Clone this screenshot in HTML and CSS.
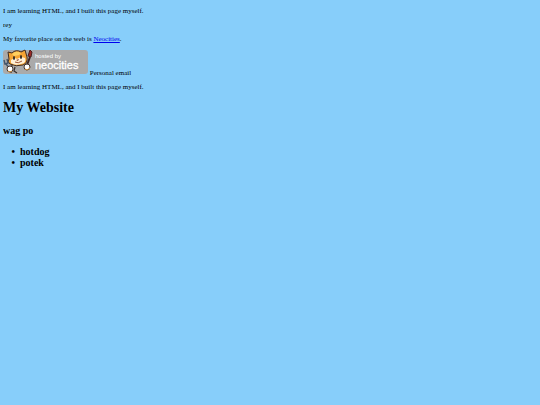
FILE: index.html
```
<!DOCTYPE html>
<html lang="en">
<head>
    <meta charset="UTF-8">
    <meta name="viewport" content="width=device-width, initial-scale=1.0">
    <title>My Website</title>
    <link rel="stylesheet" href="styles.css">
</head>
<body>
    <p>I am learning HTML, and I built this page myself.</p>
    <p>rey</p>
    <p>My favorite place on the web is <a href="https://neocities.org">Neocities</a>.</p>

    <div class="contact">
        <svg class="badge" viewBox="0 0 85 26" role="img" aria-label="hosted by neocities">
            <rect x="0" y="1" width="85" height="24" rx="3" fill="#aaa"/>
            <!-- body -->
            <path d="M9 16 L8 24 M12 18 L11 22 L14 24 M22 16 L24 21" fill="none" stroke="#3a302c" stroke-width="1.2"/>
            <!-- cat -->
            <path d="M6 10 L5 3 L9 4 Q13 0 18 3 L22 1 L24 8 Q25 14 20 16 Q13 18 7 15 Q4 13 6 10 Z" fill="#f5a535" stroke="#402b20" stroke-width="1"/>
            <path d="M9 5 Q13 1 18 4 L16 6 L11 7 Z" fill="#ffd060"/>
            <path d="M8 11 Q12 8 14 10 Q18 7 22 9 Q24 14 18 15 Q12 17 8 14 Z" fill="#fff0d5"/>
            <ellipse cx="11" cy="9" rx="1" ry="2" fill="#302824"/>
            <ellipse cx="18" cy="8" rx="1" ry="2" fill="#302824"/>
            <path d="M13 11 L16 10 L15 12 Z" fill="#8d4630"/>
            <path d="M12 13 Q15 15 19 12" fill="none" stroke="#9e5335" stroke-width="1"/>
            <!-- fork -->
            <path d="M1 11 L2 15 L5 14 L4 10 M3 15 L7 20" fill="none" stroke="#43566c" stroke-width="1.4"/>
            <!-- brush -->
            <path d="M27 8 L24 16" stroke="#40241f" stroke-width="2"/>
            <path d="M25 7 L27 1 L29 3 L28 8 Z" fill="#9b2a25" stroke="#4b2020" stroke-width="1"/>
            <!-- paws -->
            <circle cx="7" cy="20" r="3" fill="#fff" stroke="#44352d"/>
            <circle cx="24" cy="18" r="3" fill="#fff" stroke="#44352d"/>
            <path d="M5 22 Q7 24 9 22 M22 20 Q24 22 27 19" fill="none" stroke="#d99a45" stroke-width="1"/>
            <text class="badge-small" x="32" y="9">hosted by</text>
            <text class="badge-name" x="32" y="20">neocities</text>
        </svg>
        Personal email
    </div>

    <p>I am learning HTML, and I built this page myself.</p>

    <h1>My Website</h1>
    <h2>wag po</h2>
    <ul>
        <li>hotdog</li>
        <li>potek</li>
    </ul>
</body>
</html>
```

FILE: styles.css
```
body {
    margin: 7px 3px;
    background-color: #87cefa;
    color: #000;
    font-family: "Liberation Serif", "Times New Roman", serif;
    font-size: 7px;
    line-height: 8px;
}
p {
    margin: 0 0 6px;
}
a {
    color: #00e;
}
.contact {
    margin-bottom: 6px;
}
.badge {
    width: 85px;
    height: 26px;
    vertical-align: baseline;
}
.badge-small,
.badge-name {
    font-family: "Liberation Sans", Arial, sans-serif;
    fill: #fff;
}
.badge-small {
    font-size: 6px;
}
.badge-name {
    font-size: 11px;
    stroke: #fff;
    stroke-width: 0.3;
}
h1 {
    margin: 9px 0;
    font-size: 14px;
    line-height: 16px;
}
h2 {
    margin: 9px 0;
    font-size: 10px;
    line-height: 11px;
}
ul {
    margin: 10px 0;
    padding-left: 17px;
    font-size: 10px;
    font-weight: bold;
    line-height: 11px;
    list-style-type: "•\00a0\00a0";
}
```
